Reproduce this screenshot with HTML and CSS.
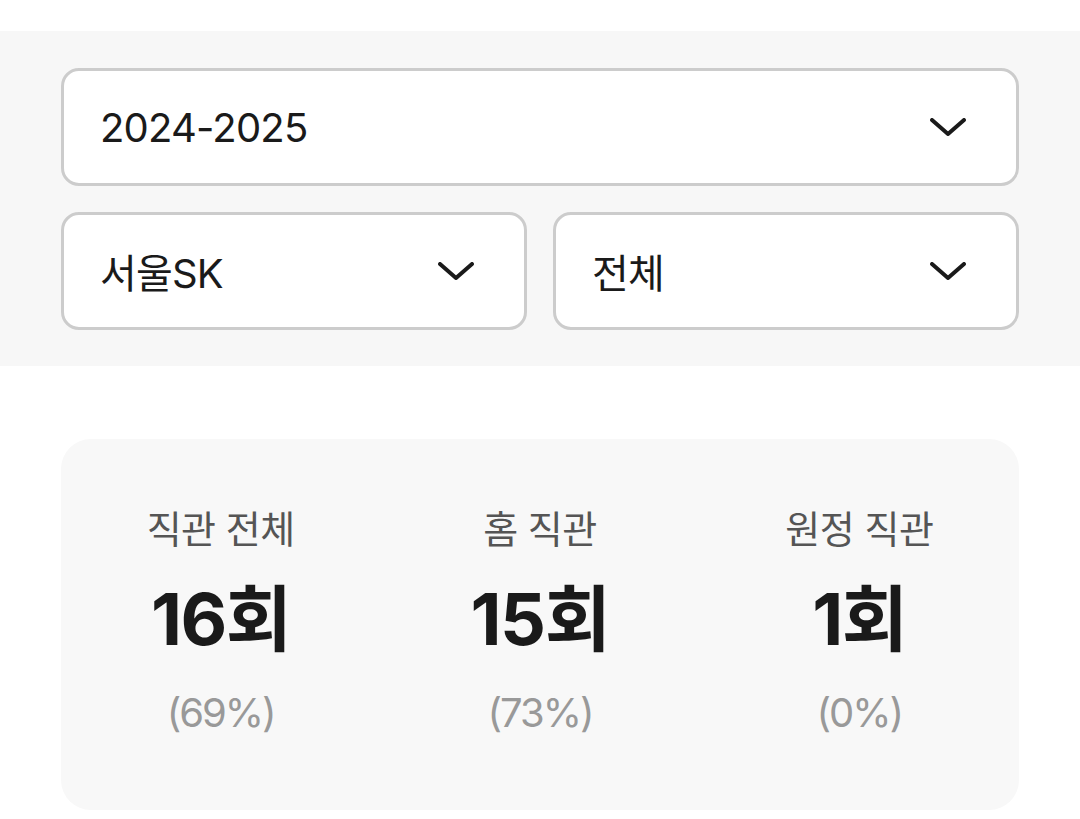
FILE: index.html
```html
<!DOCTYPE html>
<html>
    <head>
        <meta name="viewport" content="initial-scale=1, maximum-scale=1" />
        <title>직관 기록</title>
        <link rel="stylesheet" href="styles.css">
    </head>
    <body>
        <div id="filters">
            <div class="select wide">
                <span>2024-2025</span>
                <svg class="chevron" viewBox="0 0 36 18"><polyline points="2,2 18,16 34,2" /></svg>
            </div>
            <div class="select">
                <span>서울SK</span>
                <svg class="chevron" viewBox="0 0 36 18"><polyline points="2,2 18,16 34,2" /></svg>
            </div>
            <div class="select">
                <span>전체</span>
                <svg class="chevron" viewBox="0 0 36 18"><polyline points="2,2 18,16 34,2" /></svg>
            </div>
        </div>
        <div id="stats">
            <div class="stat">
                <div class="label">직관 전체</div>
                <div class="value">16회</div>
                <div class="rate">(69%)</div>
            </div>
            <div class="stat">
                <div class="label">홈 직관</div>
                <div class="value">15회</div>
                <div class="rate">(73%)</div>
            </div>
            <div class="stat">
                <div class="label">원정 직관</div>
                <div class="value">1회</div>
                <div class="rate">(0%)</div>
            </div>
        </div>
    </body>
</html>
```
FILE: styles.css
```css
body {
    margin: 0px;
    padding-top: 31px;
    background: #ffffff;
    color: #1a1a1a;
    font-family: Inter, "Noto Sans CJK KR", sans-serif;
}
#filters {
    background: #f7f7f7;
    padding: 37px 61px 36px 61px;
    display: grid;
    grid-template-columns: 1fr 1fr;
    gap: 26px;
}
.select {
    box-sizing: border-box;
    height: 118px;
    background: #ffffff;
    border: 3px solid #cccccc;
    border-radius: 18px;
    padding: 0px 50px 0px 36px;
    display: flex;
    align-items: center;
    justify-content: space-between;
    font-size: 40px;
    letter-spacing: -0.8px;
    color: #1a1a1a;
}
.select.wide {
    grid-column: 1 / 3;
}
.chevron {
    width: 36px;
    height: 18px;
    fill: none;
    stroke: #1a1a1a;
    stroke-width: 4;
    stroke-linecap: round;
    stroke-linejoin: round;
}
#stats {
    margin: 73px 61px 0px 61px;
    background: #f8f8f8;
    border-radius: 30px;
    display: grid;
    grid-template-columns: 1fr 1fr 1fr;
    padding: 62px 0px 69px 0px;
}
.stat {
    text-align: center;
}
.label {
    font-size: 38px;
    color: #555555;
    line-height: 56px;
    letter-spacing: -0.5px;
}
.value {
    font-size: 72px;
    font-weight: 700;
    color: #1a1a1a;
    line-height: 88px;
    margin-top: 18px;
    letter-spacing: -1.5px;
}
.rate {
    font-size: 40px;
    color: #999999;
    line-height: 56px;
    margin-top: 22px;
    letter-spacing: -2px;
}
```
